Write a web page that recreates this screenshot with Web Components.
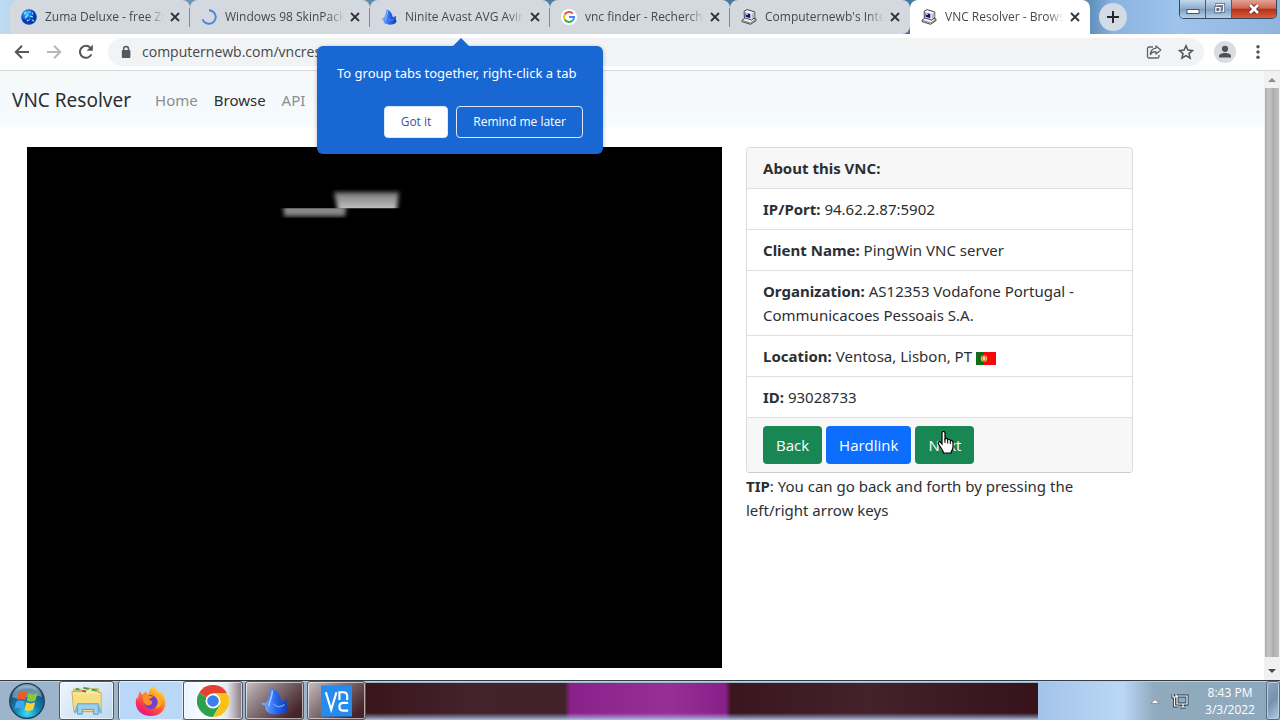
<!DOCTYPE html>
<html lang="en">
<head>
<meta charset="utf-8">
<meta name="viewport" content="width=device-width, initial-scale=1">
<title>VNC Resolver - Browse</title>
<style>
  body { margin: 0; font-family: "Open Sans", "Noto Sans", sans-serif; color: #2b2f33; }
</style>
</head>
<body>
<desktop-shell></desktop-shell>
<script>
const icons = {
  zuma: ['0 0 16 16', `<defs><radialGradient id="g" cx=".35" cy=".3"><stop offset="0" stop-color="#4fd0ff"/><stop offset=".5" stop-color="#1673e6"/><stop offset="1" stop-color="#0a3cac"/></radialGradient></defs><circle cx="8" cy="8" r="7.8" fill="url(#g)"/><path d="M3 5l2-2M7 3h3M4 9l3-3M9 7l3 1M6 12l3-2M11 11l2 1M11 4l1 1" stroke="#8ff0ff" stroke-width="1.2"/><path d="M2 11l3 1M7 9l1 2M13 7l1 2" stroke="#0b2a90" stroke-width="1"/>`],
  spinner: ['0 0 16 16', `<path d="M8 1.2A6.8 6.8 0 1 1 1.5 10.2" fill="none" stroke="#4f80df" stroke-width="1.9"/>`],
  drop: ['0 0 32 32', `<defs><linearGradient id="g"><stop offset="0" stop-color="#7eb4ff"/><stop offset=".55" stop-color="#2865ee"/><stop offset="1" stop-color="#123aa8"/></linearGradient></defs><path d="M11 1c7 2 11 7 12 14l3 2c1-2 2-3 4-3-1 3-1 5 0 7 2 4 0 7-4 9-5 2-14 2-18-1-3-2-4-5-3-8-2 1-4-1-4-3 4 1 6-1 7-4 1-4 3-6 3-13z" fill="url(#g)"/><path d="M13 4c0 8-4 13-4 18" stroke="#a8cdff" stroke-width="1.6" fill="none"/><path d="M14 19c3 4 8 5 13 1" stroke="#6ca5ff" stroke-width="1.5" fill="none"/>`],
  google: ['0 0 20 20', `<circle cx="10" cy="10" r="10" fill="#fff"/><g fill="none" stroke-width="2.4"><path d="M14.8 5.700A6.300 6.300 0 0 0 4.600 6.800" stroke="#ea4335"/><path d="M4.600 6.800a6.300 6.300 0 0 0 0 6.400" stroke="#fbbc05"/><path d="M4.600 13.200a6.300 6.300 0 0 0 9.800 1.400" stroke="#34a853"/><path d="M14.400 14.600a6 6 0 0 0 1.900-4.600H10" stroke="#4285f4"/></g>`],
  computer: ['0 0 18 18', `<g stroke="#181820" stroke-width=".9" stroke-linejoin="round"><path d="M1.200 12.500l4-3 11.600 1.500v2.200l-6 4-9.600-3z" fill="#f2f2f2"/><path d="M3.500 2.500L7 .7l8.500 2.600v6.400L12 12.400 3.800 9.800z" fill="#f6f6f6"/></g><path d="M12 5.200v6.400l3-2.200V3.800z" fill="#bcbcbc"/><path d="M4.900 3.900l5.600 1.600v4.800L5.100 8.700z" fill="#15157e"/><path d="M5.300 4.400l2.200.6v1.800l-2-.5z" fill="#fff"/><path d="M2 13l8.800 2.700 5.500-3.600" fill="none" stroke="#555" stroke-width=".8"/>`],
  close: ['0 0 16 16', `<path d="M4 4l8 8M12 4l-8 8" stroke="#303236" stroke-width="1.8"/>`],
  plus: ['0 0 16 16', `<path d="M8 2v12M2 8h12" stroke="#26282b" stroke-width="2"/>`],
  back: ['0 0 16 16', `<path d="M15 8H2M8 1.8L1.8 8 8 14.2" fill="none" stroke="#55585c" stroke-width="2"/>`],
  forward: ['0 0 16 16', `<path d="M1 8h13M8 1.8L14.2 8 8 14.2" fill="none" stroke="#b5b8bb" stroke-width="2"/>`],
  reload: ['0 0 16 16', `<path d="M13.4 10.4A6 6 0 1 1 12.4 3.8L14 5.4" fill="none" stroke="#55585c" stroke-width="2"/><path d="M14.8.6v6.2H8.6z" fill="#55585c"/>`],
  lock: ['0 0 12 14', `<rect x="1.8" y="5" width="8.6" height="8" rx="1" fill="#55585c"/><path d="M3.7 6V3.9a2.4 2.4 0 0 1 4.8 0V6" fill="none" stroke="#55585c" stroke-width="1.5"/>`],
  share: ['0 0 16 16', `<g fill="none" stroke="#5f6368" stroke-width="1.3" stroke-linejoin="round"><path d="M7 3H3a1.5 1.5 0 0 0-1.5 1.5v8A1.5 1.5 0 0 0 3 14h8.5a1.5 1.5 0 0 0 1.5-1.5V11"/><path d="M10 2l4.8 4L10 10V7.8C7.500 7.600 5.500 8.600 4.400 10.600 4.600 7 6.600 4.500 10 4.200z"/></g>`],
  star: ['0 0 16 16', `<path d="M8 1.800l1.900 4.300 4.600.4-3.500 3.100 1.100 4.600L8 11.700l-4.100 2.500L5 9.600 1.500 6.500l4.600-.4z" fill="none" stroke="#505357" stroke-width="1.500"/>`],
  user: ['0 0 22 22', `<circle cx="11" cy="11" r="11" fill="#dadce2"/><circle cx="11" cy="7.800" r="3.100" fill="#4d515a"/><path d="M5 16.500v-1.300c0-4.200 12-4.200 12 0v1.300z" fill="#4d515a"/>`],
  dots: ['0 0 16 16', `<g fill="#505357"><circle cx="8" cy="2.800" r="1.700"/><circle cx="8" cy="8" r="1.700"/><circle cx="8" cy="13.200" r="1.700"/></g>`],
  flag: ['0 0 20 13', `<path d="M0 0h8v13H0z" fill="#116b18"/><path d="M8 0h12v13H8z" fill="#f50909"/><circle cx="8" cy="6.500" r="3.200" fill="#e2c431"/><path d="M6.700 4.500h2.600v2.300q0 1.700-1.300 2-1.300-.3-1.300-2z" fill="#fff" stroke="#e33" stroke-width=".8"/>`],
  hand: ['0 0 18 24', `<path d="M5 2c0-2 3-2 3 0v6c.6-1 2.600-.7 2.700.7.800-.9 2.500-.4 2.700 1 1-.6 2.600.1 2.600 1.600V16c0 3-2 4-2 6H6.500c0-2-2-4-3-6L1.500 13c-1-2 1-3 2-1.600L5 13z" fill="#fff" stroke="#000" stroke-width="1.200"/><path d="M8 8v4M10.700 9v3.500M13.300 10v3" stroke="#000"/>`],
  minimize: ['0 0 14 12', `<rect x="1" y="6.500" width="12" height="4" fill="#fff" stroke="#465470"/>`],
  restore: ['0 0 14 14', `<path d="M4.500 1.500h8v8h-8z" fill="none" stroke="#465470" stroke-width="3"/><path d="M4.500 1.500h8v8h-8z" fill="none" stroke="#fff" stroke-width="1.500"/><path d="M2 4h7.500v7.500H2z" fill="#fff" stroke="#465470"/><path d="M4.500 6.500h2.500v2.500H4.500z" fill="#89a" stroke="#465470"/>`],
  shut: ['0 0 14 12', `<path d="M3 2l8 8M11 2l-8 8" stroke="#62242a" stroke-width="4.500"/><path d="M3 2l8 8M11 2l-8 8" stroke="#fff" stroke-width="2.800"/>`],
  start: ['0 0 36 36', `<defs><radialGradient id="g" cx=".5" cy=".85" r=".85"><stop offset="0" stop-color="#39e2f5"/><stop offset=".4" stop-color="#1480b4"/><stop offset=".8" stop-color="#195079"/><stop offset="1" stop-color="#9fc8dc"/></radialGradient></defs><circle cx="18" cy="18" r="17.300" fill="url(#g)" stroke="#1c3c57" stroke-width="1.200"/><path d="M3 14C6-1 30-1 33 14 23 10 13 18 3 14z" fill="#fff" opacity=".35"/><path d="M9.500 10c3-2 6-2 8.500-.4L16.200 17c-3-1.500-5.500-1.500-8.500.2z" fill="#ee5a24"/><path d="M19.500 10.300c3 1.500 6 1.500 9-.3l-2 7.500c-3 1.600-6 1.600-8.700 0z" fill="#8cc63f"/><path d="M7.300 18.700c3-1.600 5.700-1.600 8.500 0L14 26c-3-1.600-5.700-1.500-8.500.1z" fill="#42a5ee"/><path d="M17.400 19.300c3 1.500 5.800 1.500 8.800 0l-2 7.300c-3 1.700-6 1.700-8.700.1z" fill="#ffd034"/>`],
  folder: ['0 0 34 32', `<path d="M2 3h9l2 3h18v22H4z" fill="#e0bd5b"/><path d="M1 6h14l2-3h12v4h3v20H3z" fill="#f8e89b" stroke="#c7a64a"/><path d="M3 9h28v17H3z" fill="#f6df83"/><path d="M13 2l6 1M22 4l6 1M5 3l4 1" stroke="#3a9f64" stroke-width="2"/><path d="M12 5l4 1" stroke="#bd4428" stroke-width="2"/><path d="M7 30V19h22v11h-5v-5H12v5z" fill="#9bd0ee" stroke="#5a9bc3"/><path d="M4 29l3-9M32 29l-3-9" stroke="#6cb7df" stroke-width="2"/>`],
  firefox: ['0 0 32 32', `<defs><linearGradient id="g" x1=".85" y1="0" x2=".2" y2="1"><stop offset="0" stop-color="#fff04a"/><stop offset=".4" stop-color="#ff8c20"/><stop offset=".75" stop-color="#fb3352"/><stop offset="1" stop-color="#df0f9b"/></linearGradient></defs><path d="M5 6l2 4 4-4c0 2 1 3 3 3 0-4 2-7 5-8 1 3 4 4 6 7l2-1c7 11 3 24-11 24C4 31-2 21 2 12l1 3c0-4 1-7 2-9z" fill="url(#g)"/><circle cx="16" cy="17" r="7" fill="#7340d2"/><path d="M8 10c4-2 6 2 10 1-1 3-4 2-4 4 4 0 4 4 1 5-4 2-8-3-7-10z" fill="#ff8e2c"/><path d="M17 10c6 2 8 9 3 13 7 0 8-8 3-13z" fill="#ffad29"/>`],
  chrome: ['0 0 32 32', `<path d="M16 16L2.100 8A16 16 0 0 1 29.900 8z" fill="#e34133"/><path d="M16 16L2.100 8A16 16 0 0 0 16 32l7-12z" fill="#2ca24c"/><path d="M29.900 8H16v8l7 4-7 12A16 16 0 0 0 29.900 8z" fill="#fbc116"/><circle cx="16" cy="16" r="7.500" fill="#fff"/><circle cx="16" cy="16" r="5.800" fill="#3b7de9"/>`],
  vnc: ['0 0 32 32', `<path d="M0 0h32v32H0z" fill="#258bee"/><g fill="none" stroke="#fff" stroke-width="2.200"><path d="M5 7l5.500 18L16 7M19 15V7h4q4 0 4 4v4M28 18h-5q-4 0-4 4t4 4h5"/></g>`],
  tray: ['0 0 12 12', `<path d="M2 8.500l4-4 4 4z" fill="#fff" stroke="#5c7187" stroke-width=".6"/>`],
  network: ['0 0 18 18', `<g fill="none" stroke="#243d50" stroke-width="3"><path d="M6 4h10v8H6zM9 15h6M12 12v3M2 2v3h3V2M3.500 5v9H7"/></g><g fill="none" stroke="#fff" stroke-width="1.200"><path d="M6 4h10v8H6zM9 15h6M12 12v3M2 2v3h3V2M3.500 5v9H7"/></g>`],
  up: ['0 0 8 8', `<path d="M0 6l4-4 4 4z" fill="#8c8c8c"/>`],
  down: ['0 0 8 8', `<path d="M0 2l4 4 4-4z" fill="#484848"/>`]
};

function define(name, css, html) {
  customElements.define(name, class extends HTMLElement {
    constructor() {
      super();
      const template = document.createElement('template');
      template.innerHTML = `<style>*{box-sizing:border-box}button{font:inherit;margin:0;padding:0;border:0;background:none}${css}</style>${html}`;
      this.attachShadow({ mode: 'open' }).append(template.content.cloneNode(true));
    }
  });
}

customElements.define('ui-icon', class extends HTMLElement {
  connectedCallback() {
    if (this.shadowRoot) return;
    const [box, art] = icons[this.getAttribute('name')];
    this.attachShadow({ mode: 'open' }).innerHTML = `<style>:host{display:inline-block;flex:none;width:var(--w,16px);height:var(--h,var(--w,16px))}svg{display:block;width:100%;height:100%}</style><svg viewBox="${box}" aria-hidden="true">${art}</svg>`;
  }
});

define('browser-tab', `
  :host{display:flex;flex:0 1 180px;min-width:0;height:34px;align-items:center;gap:8px;padding:0 7px 0 11px;background:#d4d9df;border-radius:8px 8px 0 0;color:#45494e;font-size:12px;line-height:18px;position:relative}
  :host(:not([active]):not([last]))::after{content:"";position:absolute;right:0;top:8px;width:1px;height:19px;background:#84898f}
  :host([active]){background:#fff}
  :host([last]){border-bottom-right-radius:8px}
  .title{flex:1;min-width:0;margin-right:-5px;overflow:hidden;white-space:nowrap;-webkit-mask-image:linear-gradient(90deg,#000 86%,transparent);mask-image:linear-gradient(90deg,#000 86%,transparent)}
  button{flex:none;display:flex}
`, `<slot name="icon"></slot><span class="title"><slot></slot></span><button aria-label="Close tab"><ui-icon name="close"></ui-icon></button>`);

define('window-controls', `
  :host{display:flex;align-self:flex-start;height:19px;margin:0 3px 0 auto;border:1px solid #344964;border-top:0;border-radius:0 0 5px 5px;overflow:hidden}
  button{width:26px;display:flex;align-items:center;justify-content:center;background:linear-gradient(#c4d8ec,#8dabcb 50%,#7f9fc0 51%,#b6d0e8);border-right:1px solid #465d79}
  button:last-child{width:44px;border:0;background:linear-gradient(#e2a294,#cf6a54 45%,#b9301a 52%,#d85c3c)}
  ui-icon{--w:14px;--h:12px}
`, `<button aria-label="Minimize"><ui-icon name="minimize"></ui-icon></button><button aria-label="Restore"><ui-icon name="restore"></ui-icon></button><button aria-label="Close window"><ui-icon name="shut"></ui-icon></button>`);

define('tab-strip', `
  :host{display:flex;height:34px;padding-left:10px;background:linear-gradient(90deg,#c0dcf4 0,#739abd 10%,#44799f 50%,#4679a6 84%,#8ab3e0 87%,#9fc4ec 92%,#8fb4dd)}
  .new{flex:none;width:28px;height:28px;margin:3px 0 0 9px;border-radius:50%;background:#d3dbe5;display:flex;align-items:center;justify-content:center}
`, `<browser-tab><ui-icon slot="icon" name="zuma"></ui-icon>Zuma Deluxe - free Zu</browser-tab>
<browser-tab><ui-icon slot="icon" name="spinner"></ui-icon>Windows 98 SkinPack</browser-tab>
<browser-tab><ui-icon slot="icon" name="drop"></ui-icon>Ninite Avast AVG Avira</browser-tab>
<browser-tab><ui-icon slot="icon" name="google"></ui-icon>vnc finder - Recherche</browser-tab>
<browser-tab last><ui-icon slot="icon" name="computer"></ui-icon>Computernewb's Inter</browser-tab>
<browser-tab active><ui-icon slot="icon" name="computer"></ui-icon>VNC Resolver - Browse</browser-tab>
<button class="new" aria-label="New tab"><ui-icon name="plus"></ui-icon></button><window-controls></window-controls>`);

define('address-bar', `
  :host{display:flex;height:37px;box-sizing:border-box;align-items:center;padding:0 14px;background:#fff;border-bottom:1px solid #d5d7da}
  button{display:flex;flex:none}
  .nav{display:flex;gap:16px;margin-right:14px}
  form{flex:1;min-width:0;display:flex;align-items:center;height:28px;padding:0 10px 0 12px;margin:0 10px 0 0;border-radius:14px;background:#f1f3f4}
  form ui-icon[name=lock]{--w:12px;--h:14px;margin-right:10px}
  input{flex:1;min-width:0;border:0;padding:0;outline:0;background:none;font:inherit;font-size:14px;line-height:20px;color:#44474b}
  .tools{display:flex;gap:16px}
  .user{--w:22px}
  .more{margin:0 0 0 14px}
`, `<div class="nav"><button aria-label="Back"><ui-icon name="back"></ui-icon></button><button aria-label="Forward"><ui-icon name="forward"></ui-icon></button><button aria-label="Reload"><ui-icon name="reload"></ui-icon></button></div>
<form><ui-icon name="lock"></ui-icon><input aria-label="Address" value="computernewb.com/vncresolver"><div class="tools"><button type="button" aria-label="Share"><ui-icon name="share"></ui-icon></button><button type="button" aria-label="Bookmark"><ui-icon name="star"></ui-icon></button></div></form>
<button aria-label="Profile"><ui-icon class="user" name="user"></ui-icon></button><button class="more" aria-label="Menu"><ui-icon name="dots"></ui-icon></button>`);

define('tab-tip', `
  :host{position:absolute;z-index:2;left:317px;top:46px;box-sizing:border-box;width:286px;padding:18px 20px 16px;border-radius:6px;background:#1967d2;color:#fff;font-size:13px;line-height:18px;box-shadow:0 1px 4px #0004}
  :host::before{content:"";position:absolute;left:135px;top:-8px;border:solid transparent;border-width:0 9px 9px;border-bottom-color:#1967d2}
  p{margin:0 0 24px;white-space:nowrap;font-family:"Noto Sans",sans-serif}
  div{display:flex;justify-content:flex-end;gap:8px}
  button{height:32px;padding:0 16px;border:1px solid #dbe8fb;border-radius:4px;color:#fff;font-size:12px;white-space:nowrap}
  .ok{background:#fff;color:#4352a0}
`, `<p>To group tabs together, right-click a tab</p><div><button class="ok">Got it</button><button>Remind me later</button></div>`);

define('site-nav', `
  :host{display:flex;align-items:center;height:57px;box-sizing:border-box;padding:0 12px;gap:16px;background:linear-gradient(#f7f9fa,#f5fafd 80%,#fafdfe)}
  a{text-decoration:none;color:#8a8e91;font-size:15px;line-height:24px;font-family:"Noto Sans",sans-serif}
  .brand{font-size:19px;line-height:30px;color:#2b2f33;margin-right:8px}
  .on{color:#2b2f33}
`, `<a class="brand" href="#">VNC Resolver</a><a href="#">Home</a><a class="on" href="#">Browse</a><a href="#">API</a>`);

define('remote-screen', `
  :host{display:block;background:#000;aspect-ratio:4/3;overflow:hidden}
  svg{display:block;width:100%;height:100%}
`, `<svg viewBox="0 0 695 521" role="img" aria-label="Remote screen"><defs><filter id="b"><feGaussianBlur stdDeviation="2"/></filter><linearGradient id="m" x2="0" y2="1"><stop stop-color="#777"/><stop offset="1" stop-color="#ddd"/></linearGradient><clipPath id="c1"><path d="M250 61h76v16h-76z"/></clipPath><clipPath id="c2"><path d="M300 40h80v21h-80z"/></clipPath></defs><g clip-path="url(#c1)"><path d="M256 53h64l-2 16h-61z" fill="#888" filter="url(#b)"/></g><g clip-path="url(#c2)"><path d="M307 45h65l-3 23h-57z" fill="url(#m)" filter="url(#b)"/></g></svg>`);

define('info-row', `
  :host{display:block;padding:8px 16px;border-bottom:1px solid #dfdfdf}
  :host([heading]){background:#f7f7f7}
`, `<slot></slot>`);

define('vnc-info', `
  :host{display:block;font-size:15px;line-height:24px;font-family:"Noto Sans",sans-serif}
  .card{border:1px solid #dcdcdc;border-bottom-color:#ccc;border-radius:4px;background:#fff;overflow:hidden}
  .foot{display:flex;gap:4px;padding:8px 16px;background:#f7f7f7}
  button{height:38px;padding:0 13px;border-radius:4px;background:#198754;color:#fff;font-family:"Open Sans",sans-serif}
  .blue{background:#0d6efd}
  .next{position:relative}
  .next ui-icon{position:absolute;left:22px;top:5px;--w:18px;--h:24px}
  .flag{--w:20px;--h:13px;vertical-align:-3px}
  p{margin:1px 0 0}
  b{font-weight:700}
`, `<div class="card"><info-row heading><b>About this VNC:</b></info-row>
<info-row><b>IP/Port:</b> 94.62.2.87:5902</info-row>
<info-row><b>Client Name:</b> PingWin VNC server</info-row>
<info-row><b>Organization:</b> AS12353 Vodafone Portugal - Communicacoes Pessoais S.A.</info-row>
<info-row><b>Location:</b> Ventosa, Lisbon, PT <ui-icon class="flag" name="flag"></ui-icon></info-row>
<info-row><b>ID:</b> 93028733</info-row>
<div class="foot"><button>Back</button><button class="blue">Hardlink</button><button class="next">Next<ui-icon name="hand"></ui-icon></button></div></div>
<p><b>TIP</b>: You can go back and forth by pressing the left/right arrow keys</p>`);

define('scroll-bar', `
  :host{display:flex;flex-direction:column;flex:none;box-sizing:border-box;width:16px;background:#f1f1f1;padding:5px 1px}
  ui-icon{--w:8px;align-self:center}
  div{flex:1;margin:4px 0 10px;background:linear-gradient(90deg,#aaa,#c4c4c4 20%,#bbb 50%,#adadad 52%,#c0c0c0)}
`, `<ui-icon name="up"></ui-icon><div></div><ui-icon name="down"></ui-icon>`);

define('web-page', `
  :host{display:flex;flex:1;background:#fff}
  .page{flex:1;min-width:0}
  main{display:grid;grid-template-columns:695fr 387fr 107fr;column-gap:24px;align-items:start;padding:19px 0 12px 27px}
`, `<div class="page"><site-nav></site-nav><main><remote-screen></remote-screen><vnc-info></vnc-info></main></div><scroll-bar></scroll-bar>`);

define('task-bar', `
  :host{display:flex;box-sizing:border-box;height:40px;flex:none;border-top:1px solid #353d44;box-shadow:inset 0 1px #c3cdd5;background:#9db4ca}
  button{display:flex;align-items:center;justify-content:center;flex:none;border:1px solid #4d5a66;border-radius:3px;box-shadow:inset 0 0 0 1px #fff9;--w:32px;--h:32px}
  .start{width:54px;margin-right:5px;border:0;box-shadow:none;--w:36px;--h:36px}
  .files{width:55px;background:linear-gradient(135deg,#edf6ff,#bfd8ef);margin-right:4px}
  .fox{width:65px;background:#b9d7f7;border-width:0 0 0 1px}
  .chrome{width:60px;background:linear-gradient(90deg,#e9f5ff,#fff 50%,#dfe5eb 75%,#8c7880);margin-right:2px}
  .dark{width:59px;background:linear-gradient(135deg,#c8bfc3,#837277 40%,#46242b 85%);margin-right:3px;--w:28px;--h:28px}
  .vnc{--w:31px;--h:32px;margin-right:0}
  .glass{flex:1;margin-top:2px;background:linear-gradient(transparent 30px,#a9c2e8aa 35px,#a8c4eb),linear-gradient(90deg,#3a141b,#43222a 15%,#42222a 29.6%,#8a218b 30.4%,#962f96 45%,#89208a 53.500%,#3a151d 54.300%,#44222b 75%,#36121a)}
  .tray{display:flex;align-items:center;flex:0 0 242px;background:linear-gradient(90deg,#a4c3e9,#bad7f6 35%,#91aabd 48%,#8da8bd);box-shadow:inset 0 1px #c3cdd5}
  .tray button{border:0;box-shadow:none;--w:12px;--h:12px}
  .tray .net{--w:18px;--h:18px;margin:0 5px 0 10px}
  .arrow{margin-left:111px}
  time{flex:1;text-align:center;color:#fff;font-size:12px;line-height:17px}
  .tray .show{align-self:stretch;width:14px;border:1px solid #576a80;box-shadow:inset 0 0 0 1px #b8cde2;background:linear-gradient(135deg,#91a9bf,#7690ad 50%,#b1ceec)}
`, `<button class="start" aria-label="Start"><ui-icon name="start"></ui-icon></button><button class="files" aria-label="Explorer"><ui-icon name="folder"></ui-icon></button><button class="fox" aria-label="Firefox"><ui-icon name="firefox"></ui-icon></button><button class="chrome" aria-label="Chrome"><ui-icon name="chrome"></ui-icon></button><button class="dark" aria-label="Downloads"><ui-icon name="drop"></ui-icon></button><button class="dark vnc" aria-label="VNC Viewer"><ui-icon name="vnc"></ui-icon></button><div class="glass"></div>
<div class="tray"><button class="arrow" aria-label="Show hidden icons"><ui-icon name="tray"></ui-icon></button><button class="net" aria-label="Network"><ui-icon name="network"></ui-icon></button><time datetime="2022-03-03T20:43">8:43 PM<br>3/3/2022</time><button class="show" aria-label="Show desktop"></button></div>`);

define('desktop-shell', `
  :host{display:flex;flex-direction:column;min-height:100vh;position:relative}
`, `<tab-strip></tab-strip><address-bar></address-bar><tab-tip></tab-tip><web-page></web-page><task-bar></task-bar>`);
</script>
</body>
</html>
